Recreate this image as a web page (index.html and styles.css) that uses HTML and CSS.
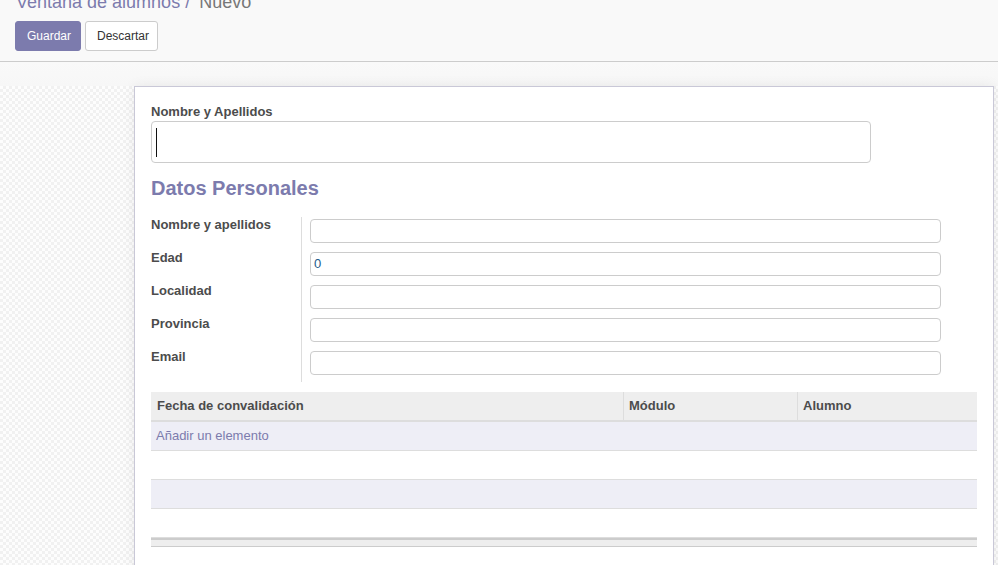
FILE: index.html
```html
<!DOCTYPE html>
<html lang="es">
<head>
<meta charset="utf-8">
<title>Ventana de alumnos / Nuevo</title>
<link rel="stylesheet" href="styles.css">
</head>
<body>
<div class="control-panel">
  <ol class="breadcrumb">
    <li class="crumb-link">Ventana de alumnos</li>
    <li class="crumb-sep">/</li>
    <li class="crumb-active">Nuevo</li>
  </ol>
  <div class="buttons">
    <button class="btn btn-primary">Guardar</button>
    <button class="btn btn-secondary">Descartar</button>
  </div>
</div>
<div class="content">
  <div class="sheet">
    <div class="title-label">Nombre y Apellidos</div>
    <div class="title-input"><span class="caret"></span></div>
    <h2 class="section-title">Datos Personales</h2>
    <div class="group">
      <div class="g-label">Nombre y apellidos</div>
      <div class="g-field"><div class="input"></div></div>
      <div class="g-label">Edad</div>
      <div class="g-field"><div class="input num">0</div></div>
      <div class="g-label">Localidad</div>
      <div class="g-field"><div class="input"></div></div>
      <div class="g-label">Provincia</div>
      <div class="g-field"><div class="input"></div></div>
      <div class="g-label">Email</div>
      <div class="g-field"><div class="input"></div></div>
    </div>
    <div class="list">
      <div class="list-head">
        <div class="th col1">Fecha de convalidación</div>
        <div class="th col2">Módulo</div>
        <div class="th col3">Alumno</div>
      </div>
      <div class="row alt"><span class="add-link">Añadir un elemento</span></div>
      <div class="row"></div>
      <div class="row alt"></div>
      <div class="row"></div>
      <div class="list-foot"></div>
    </div>
  </div>
</div>
</body>
</html>
```
FILE: styles.css
```css
* { box-sizing: border-box; }
html, body { margin: 0; padding: 0; }
body {
  font-family: "Liberation Sans", Arial, sans-serif;
  font-size: 13px;
  color: #666;
  background: #f9f9f9;
  height: 565px;
  overflow: hidden;
}
.control-panel {
  display: flow-root;
  background: #f9f9f9;
  border-bottom: 1px solid #cccccc;
  padding: 0 15px 10px 15px;
  height: 62px;
}
.breadcrumb {
  list-style: none;
  margin: -8px 0 0 1px;
  padding: 0;
  display: flex;
  height: 20px;
  font-size: 18px;
  line-height: 20px;
}
.crumb-link { color: #7c7bad; }
.crumb-sep { color: #7c7bad; padding: 0 9px 0 5px; }
.crumb-active { color: #777777; }
.buttons {
  margin-top: 9px;
  display: flex;
  gap: 4px;
}
.btn {
  height: 30px;
  font-family: "Liberation Sans", Arial, sans-serif;
  font-size: 12px;
  border-radius: 3px;
  padding: 0 11px;
  margin: 0;
  cursor: pointer;
}
.btn-primary {
  background: #7c7bad;
  color: #ffffff;
  border: 1px solid #7c7bad;
  width: 66px;
}
.btn-secondary {
  background: #ffffff;
  color: #333333;
  border: 1px solid #cccccc;
  width: 73px;
}
.content {
  height: 503px;
  padding: 24px 0 0 134px;
  background:
    linear-gradient(#f9f9f9, #f7f7f7) top left / 100% 24px no-repeat,
    repeating-conic-gradient(#f1f1f1 0 25%, #fdfdfd 0 50%) 0 0 / 6px 6px;
}
.sheet {
  width: 860px;
  min-height: 500px;
  background: #ffffff;
  border: 1px solid #c9c8d7;
  box-shadow: 0 0 12px rgba(0, 0, 0, 0.07);
  padding: 16px 16px 0 16px;
}
.title-label {
  font-weight: bold;
  color: #4c4c4c;
  font-size: 13px;
  line-height: 18px;
  height: 18px;
}
.title-input {
  width: 720px;
  height: 42px;
  border: 1px solid #cccccc;
  border-radius: 4px;
  padding: 6px 0 0 4px;
}
.caret {
  display: block;
  width: 1px;
  height: 29px;
  background: #111111;
}
.section-title {
  margin: 13px 0 0 0;
  font-size: 20px;
  line-height: 24px;
  height: 24px;
  font-weight: bold;
  color: #7c7bad;
}
.group {
  margin-top: 17px;
  display: grid;
  grid-template-columns: 150px 1fr;
  grid-auto-rows: 33px;
}
.g-label {
  font-weight: bold;
  color: #4c4c4c;
  font-size: 13px;
  line-height: 16px;
}
.g-field {
  border-left: 1px solid #dddddd;
  padding: 2px 36px 0 8px;
}
.input {
  height: 24px;
  border: 1px solid #cccccc;
  border-radius: 4px;
  padding: 0 3px;
  font-size: 13px;
  line-height: 22px;
}
.input.num { color: #245a8a; }
.list { margin-top: 10px; }
.list-head {
  display: flex;
  height: 30px;
  background: #eeeeee;
  border-bottom: 2px solid #dddddd;
}
.th {
  font-weight: bold;
  color: #4c4c4c;
  line-height: 28px;
  padding-left: 5px;
}
.col1 { width: 472px; padding-left: 6px; }
.col2 { width: 174px; border-left: 1px solid #dddddd; }
.col3 { flex: 1; border-left: 1px solid #dddddd; }
.row {
  height: 29px;
  border-bottom: 1px solid #dddddd;
  line-height: 28px;
  padding-left: 5px;
}
.row.alt { background: #eeeef6; }
.row:last-of-type { border-bottom: none; }
.add-link { color: #7c7bad; }
.list-foot {
  height: 9px;
  background: #eeeeee;
  border-top: 2px solid #cccccc;
  border-bottom: 1px solid #cccccc;
}
```
